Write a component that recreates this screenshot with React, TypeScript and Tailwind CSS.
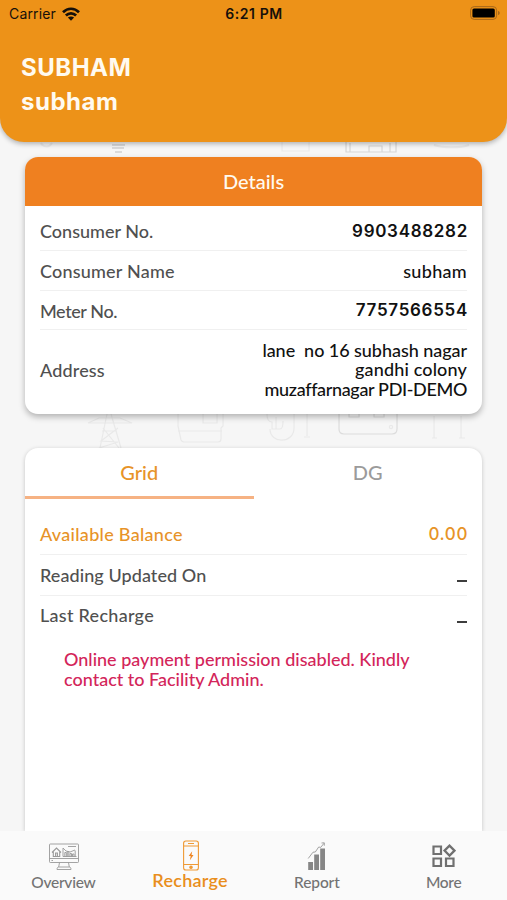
import type { ReactNode } from "react";
import clsx from "clsx";

const DETAILS = [
  { label: "Consumer No.", value: "9903488282", row: "h-[45px] pt-[7px]", labelStyle: "", numeric: true },
  { label: "Consumer Name", value: "subham", row: "h-[40px] pt-px", labelStyle: "tracking-[0.2px]", numeric: false },
  { label: "Meter No.", value: "7757566554", row: "h-[39px] pt-[2px]", labelStyle: "tracking-[-0.4px]", numeric: true },
];

const TABS = [
  { key: "grid", label: "Grid", active: true },
  { key: "dg", label: "DG", active: false },
];

const ADDRESS_LINES = [
  { text: "lane  no 16 subhash nagar", style: "tracking-[-0.05px]" },
  { text: "gandhi colony", style: "tracking-[0.15px]" },
  { text: "muzaffarnagar PDI-DEMO", style: "tracking-[-0.35px]" },
];

const WifiIcon = () => (
  <svg width="18" height="14" viewBox="0 0 18 14" fill="none" stroke="#16100a" strokeWidth="2.7">
    <path d="M1 5.2C5.7.6 12.3.6 17 5.2" />
    <path d="M3.9 8.5c2.9-2.9 7.3-2.9 10.2 0" />
    <path d="M9 13.7 5.9 10.6c1.7-1.6 4.5-1.6 6.2 0z" fill="#16100a" stroke="none" />
  </svg>
);

const BatteryIcon = () => (
  <svg width="31" height="14" viewBox="0 0 31 14">
    <rect x="0.6" y="0.6" width="26" height="12.8" rx="3.6" fill="none" stroke="#a8681a" strokeWidth="1" />
    <rect x="2.4" y="2.4" width="22.4" height="9.2" rx="1.6" fill="#000" />
    <path d="M28 5v4c1.2-.4 1.800-1.200 1.800-2s-.6-1.600-1.800-2z" fill="#a8681a" />
  </svg>
);

const OverviewIcon = () => (
  <svg className="ml-[2px]" width="30" height="28" viewBox="0 0 30 28" fill="none" stroke="#999" strokeWidth="0.9">
    <rect x="0.5" y="1" width="29" height="18.5" rx="0.8" />
    <path d="M.5 15.5h29M2.5 17.5H4M10.5 19.5l-.8 4.500M19.500 19.500l.8 4.500M8 26.500c0-1.800.7-2.500 2-2.500h10c1.300 0 2 .7 2 2.500z" />
    <path d="M3 9.500 7.500 5l4.500 4.500M4.300 8.500v5h6.400v-5M6.600 13.500V10h1.800v3.500" strokeWidth="1.1" />
    <path d="M14 5v8.500h13.500M15.800 13.500v-4h1.500v4M18.300 13.500v-5h1.500v5M21 13.500v-3h1.500v3M23.500 13.500V11H25v2.500M26.200 13.500v-6M14 5l3 3 4 1 5-2M19 3.500h8" />
  </svg>
);

const RechargeIcon = () => (
  <svg className="ml-px" width="16" height="31" viewBox="0 0 16 31" fill="none" stroke="#ef9a35" strokeWidth="1.1">
    <rect x="0.6" y="1" width="14.8" height="29" rx="2.3" />
    <path d="M.6 6h14.800M.6 24.500h14.800M5 3.500h6" />
    <circle cx="8" cy="27.3" r="1.2" fill="#ef9a35" />
    <path d="M9.200 11.200 5.700 16h2l-.8 4.200 3.600-5.100h-2z" fill="#ef8520" stroke="none" />
  </svg>
);

const ReportIcon = () => (
  <svg width="20" height="30" viewBox="0 0 20 30" fill="#868686">
    <path d="M1.200 21H6v8H1.200zM7.200 13.500H12V29H7.200zM13.200 7.500H18V29h-4.800z" />
    <path d="M1.200 17.500 6 11.200l2.300-.2L11.700 6l2 .4L17 2.300M14.500 2l2.800-.2v2.900" fill="none" stroke="#999" strokeWidth="0.9" />
  </svg>
);

const MoreIcon = () => (
  <svg width="24" height="27" viewBox="0 0 24 27" fill="none" stroke="#707070" strokeWidth="2.2">
    <path d="M1.500 2.500h7.500V10H1.500zM1.500 14.500h7.500V22H1.500zM14 14.500h7.500V22H14zM17.500 1.600l5 5-5 5-5-5z" />
  </svg>
);

const NAV_ITEMS = [
  { label: "Overview", icon: <OverviewIcon />, active: false, labelStyle: "tracking-[-0.25px]" },
  { label: "Recharge", icon: <RechargeIcon />, active: true, labelStyle: "tracking-[0.25px]" },
  { label: "Report", icon: <ReportIcon />, active: false, labelStyle: "tracking-[-0.1px]" },
  { label: "More", icon: <MoreIcon />, active: false, labelStyle: "tracking-[-0.3px]" },
];

// Faint line art that shows through between the cards
const Backdrop = () => (
  <svg className="absolute inset-0" width="507" height="900" viewBox="0 0 507 900" fill="none" stroke="#e9e9e9" strokeWidth="1.2">
    <path d="M41 143c2 4 8 5 11 0" strokeWidth="2" />
    <path d="M112 145h13M112 148h12M115 152h7" stroke="#dadada" strokeWidth="2" />
    <path d="M282 140v11h27v-11" />
    <path d="M346 140v12h50v-12M350 152v-9M369 152v-6h13v6M374 146h8M390 143v9" stroke="#d6d6d6" />
    <path d="M434 145c9 3 27 3 35 0" strokeWidth="2" />
    <path d="M107 414l-7 34M111 414l10 34M88 423h44l-12-5H99zM103 428l16 20M118 428l-17 13 17 1-19 6M102 431h15" />
    <path d="M178 410v16l3 14q1 2 3 2h34q3 0 3-3v-11l2-2v-16M178 431h44M203 414v9h14v-9" />
    <path d="M267 414c0 5 2 8 5 8v7h8c2 0 3-3 3-8M270 429c0 15 24 15 24-1v-14M276 417v12M307 414v22M304 437h6" />
    <path d="M339 412v17q0 5 5 5h48q5 0 5-5v-17M349 414v3h10v-3M374 414v3h10v-3" stroke="#dcdcdc" />
    <circle cx="391" cy="427" r="1.6" />
    <path d="M434 416v22M432 438h5M461 416v22M459 438h6" />
  </svg>
);

const Dash = () => <span className="mt-[12px] h-[2px] w-[10px] bg-[#3d3d3d]" />;

const Row = ({ label, className, children }: { label: string; className: string; children: ReactNode }) => (
  <div className={clsx("flex items-center justify-between", className)}>
    <span>{label}</span>
    {children}
  </div>
);

const App = () => {
  return (
    <div className="relative flex h-[900px] w-[507px] flex-col overflow-hidden bg-[#f6f6f6] font-['Lato',sans-serif] text-[18px] font-medium text-[#505050]">
      <Backdrop />

      <header className="relative h-[142px] shrink-0 rounded-b-[24px] bg-[#ed9218] font-['Inter',sans-serif] shadow-[0_2px_5px_rgba(0,0,0,0.28)]">
        <div className="grid h-7 grid-cols-3 items-center pr-[6px] pl-[9px] text-[14px] leading-none font-normal text-[#16100a]">
          <div className="flex items-center gap-[6px]">
            <span className="tracking-[0.15px]">Carrier</span>
            <WifiIcon />
          </div>
          <span className="-ml-[2px] text-center font-semibold tracking-[0.55px]">6:21 PM</span>
          <div className="-mt-[2px] flex justify-end">
            <BatteryIcon />
          </div>
        </div>
        <div className="px-[21px] pt-[23px] text-[24px] leading-[34px] font-bold tracking-[0.5px] text-[#fffaf0]">
          <h1>SUBHAM</h1>
          <h2>subham</h2>
        </div>
      </header>

      <section className="relative mx-[25px] mt-[15px] h-[257px] shrink-0 overflow-hidden rounded-[13px] bg-white shadow-[0_3px_6px_rgba(0,0,0,0.28)]">
        <div className="flex h-[49px] items-center justify-center bg-[#ef8020] pb-px text-[20px] text-[#fffaf0]">
          Details
        </div>
        <div className="px-[15px]">
          {DETAILS.map((item) => (
            <Row key={item.label} label={item.label} className={clsx("border-b border-[#f0f0f0]", item.row, item.labelStyle)}>
              <span
                className={clsx(
                  "text-[#111]",
                  item.numeric ? "-mr-px font-['Inter',sans-serif] text-[17px] font-semibold tracking-[0.7px]" : "tracking-[0.3px]"
                )}
              >
                {item.value}
              </span>
            </Row>
          ))}
          <Row label="Address" className="h-[80px] tracking-[0.15px]">
            <div className="text-right leading-[19.5px] whitespace-pre text-[#111]">
              {ADDRESS_LINES.map((line) => (
                <p key={line.text} className={line.style}>
                  {line.text}
                </p>
              ))}
            </div>
          </Row>
        </div>
      </section>

      <section className="relative mx-[25px] mt-[34px] flex-1 rounded-t-[13px] bg-white shadow-[0_1px_4px_rgba(0,0,0,0.2)]">
        <div className="grid h-[51px] grid-cols-2 text-[20px]">
          {TABS.map((tab) => (
            <div
              key={tab.key}
              className={clsx(
                "flex items-center justify-center border-b-[3px]",
                tab.active ? "border-[#f6b283] text-[#e79328]" : "border-transparent text-[#9b9b9b]"
              )}
            >
              {tab.label}
            </div>
          ))}
        </div>
        <div className="px-[15px] pt-4">
          <Row label="Available Balance" className="h-[40px] border-b border-[#f0f0f0] tracking-[0.3px] text-[#e79328]">
            <span className="-mr-px font-['Inter',sans-serif] text-[17px] font-medium tracking-[0.6px]">0.00</span>
          </Row>
          <Row label="Reading Updated On" className="h-[41px] border-b border-[#f0f0f0] tracking-[0.08px]">
            <Dash />
          </Row>
          <Row label="Last Recharge" className="h-[39px] tracking-[0.28px]">
            <Dash />
          </Row>
          <p className="mt-[15px] ml-6 leading-[19.5px] text-[#d3255a]">
            Online payment permission disabled. Kindly
            <br />
            contact to Facility Admin.
          </p>
        </div>
      </section>

      <nav className="relative grid h-[69px] shrink-0 grid-cols-4 bg-[#fafafa]">
        {NAV_ITEMS.map((item) => (
          <div
            key={item.label}
            className={clsx(
              "flex flex-col items-center",
              item.active ? "text-[18px] leading-[19px] font-semibold text-[#e98e1c]" : "text-[15.5px] leading-5 text-[#737373]",
              item.labelStyle
            )}
          >
            <div className="flex h-10 items-end justify-center">{item.icon}</div>
            <span className={clsx(!item.active && "pt-px")}>{item.label}</span>
          </div>
        ))}
      </nav>
    </div>
  );
};

export default App;
